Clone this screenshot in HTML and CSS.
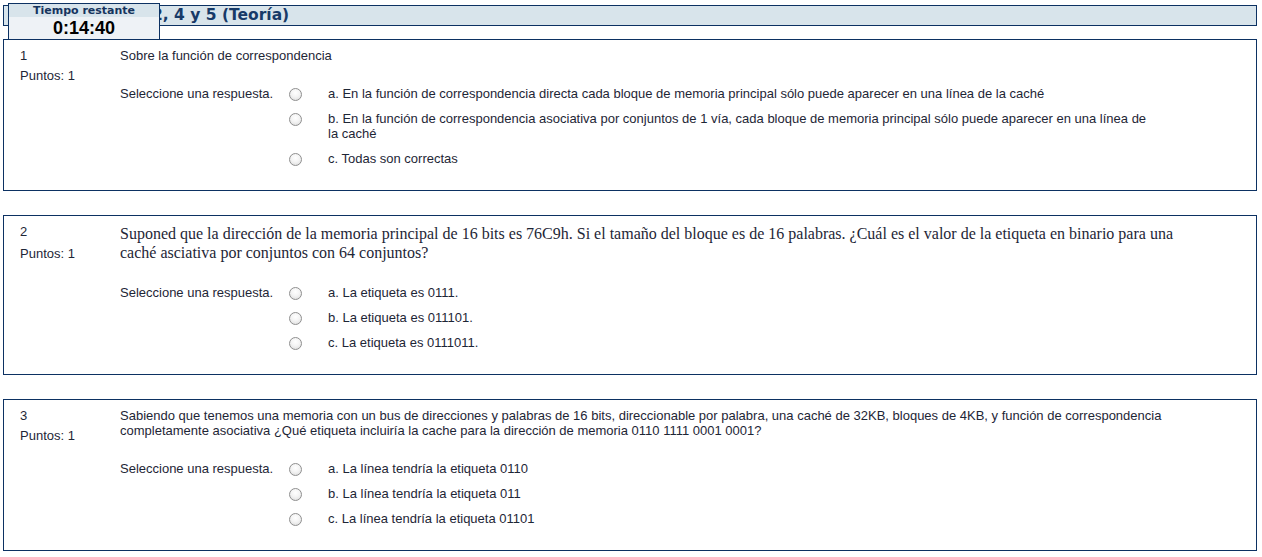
FILE: index.html
```html
<!DOCTYPE html>
<html lang="es">
<head>
<meta charset="utf-8">
<title>Examen</title>
<link rel="stylesheet" href="styles.css">
</head>
<body>
<div class="page">
  <div class="timer">
    <div class="timer-label">Tiempo restante</div>
    <div class="timer-value">0:14:40</div>
  </div>
  <h2 class="quiz-title">2, 4 y 5 (Teoría)</h2>

  <div class="que">
    <div class="info">
      <div class="no">1</div>
      <div class="grade">Puntos: 1</div>
    </div>
    <div class="content">
      <div class="qtext">Sobre la función de correspondencia</div>
      <div class="ablock">
        <div class="prompt">Seleccione una respuesta.</div>
        <div class="answer">
          <div class="r"><input type="radio" name="q1"><label class="opt">a. En la función de correspondencia directa cada bloque de memoria principal sólo puede aparecer en una línea de la caché</label></div>
          <div class="r"><input type="radio" name="q1"><label class="opt">b. En la función de correspondencia asociativa por conjuntos de 1 vía, cada bloque de memoria principal sólo puede aparecer en una línea de la caché</label></div>
          <div class="r"><input type="radio" name="q1"><label class="opt">c. Todas son correctas</label></div>
        </div>
      </div>
    </div>
  </div>

  <div class="que">
    <div class="info">
      <div class="no">2</div>
      <div class="grade grade-serif">Puntos: 1</div>
    </div>
    <div class="content">
      <div class="qtext qtext-serif">Suponed que la dirección de la memoria principal de 16 bits es 76C9h. Si el tamaño del bloque es de 16 palabras. ¿Cuál es el valor de la etiqueta en binario para una caché asciativa por conjuntos con 64 conjuntos?</div>
      <div class="ablock">
        <div class="prompt">Seleccione una respuesta.</div>
        <div class="answer">
          <div class="r"><input type="radio" name="q2"><label class="opt">a. La etiqueta es 0111.</label></div>
          <div class="r"><input type="radio" name="q2"><label class="opt">b. La etiqueta es 011101.</label></div>
          <div class="r"><input type="radio" name="q2"><label class="opt">c. La etiqueta es 0111011.</label></div>
        </div>
      </div>
    </div>
  </div>

  <div class="que">
    <div class="info">
      <div class="no">3</div>
      <div class="grade">Puntos: 1</div>
    </div>
    <div class="content">
      <div class="qtext">Sabiendo que tenemos una memoria con un bus de direcciones y palabras de 16 bits, direccionable por palabra, una caché de 32KB, bloques de 4KB, y función de correspondencia completamente asociativa ¿Qué etiqueta incluiría la cache para la dirección de memoria 0110 1111 0001 0001?</div>
      <div class="ablock">
        <div class="prompt">Seleccione una respuesta.</div>
        <div class="answer">
          <div class="r"><input type="radio" name="q3"><label class="opt">a. La línea tendría la etiqueta 0110</label></div>
          <div class="r"><input type="radio" name="q3"><label class="opt">b. La línea tendría la etiqueta 011</label></div>
          <div class="r"><input type="radio" name="q3"><label class="opt">c. La línea tendría la etiqueta 01101</label></div>
        </div>
      </div>
    </div>
  </div>
</div>
</body>
</html>
```
FILE: styles.css
```css
html, body {
  margin: 0;
  padding: 0;
  background: #ffffff;
}

body {
  font-family: "Liberation Sans", Arial, sans-serif;
  font-size: 13px;
  color: #1e2636;
}

.page {
  position: relative;
  padding: 5px 5px 0 3px;
}

.timer {
  position: absolute;
  top: 3px;
  left: 8px;
  width: 152px;
  height: 37px;
  box-sizing: border-box;
  border: 1px solid #0c3162;
  background: #eef2f6;
  text-align: center;
  z-index: 2;
}

.timer-label {
  background: #d8e4eb;
  height: 13px;
  font-family: "DejaVu Sans", Verdana, sans-serif;
  font-weight: bold;
  font-size: 11px;
  line-height: 13px;
  color: #16345e;
}

.timer-value {
  font-family: "Liberation Sans", Arial, sans-serif;
  font-weight: bold;
  font-size: 18px;
  line-height: 22px;
  color: #000000;
}

.quiz-title {
  margin: 0;
  height: 21px;
  box-sizing: border-box;
  border: 1px solid #0c3162;
  background: #d8e4eb;
  font-family: "DejaVu Sans", Verdana, sans-serif;
  font-weight: bold;
  font-size: 15.5px;
  line-height: 19px;
  color: #173a68;
  padding-left: 148px;
  white-space: nowrap;
  overflow: hidden;
}

.que {
  display: flex;
  border: 1px solid #0c3162;
  padding: 8px 0 24px 0;
  margin-top: 24px;
}

.quiz-title + .que {
  margin-top: 13px;
}

.info {
  width: 100px;
  padding-left: 16px;
  flex: none;
  line-height: 15px;
}

.grade {
  margin-top: 5px;
}

.grade-serif {
  margin-top: 7px;
}

.content {
  flex: 1;
  padding-right: 76px;
  min-width: 0;
}

.qtext {
  line-height: 15px;
}

.qtext-serif {
  font-family: "Liberation Serif", "Times New Roman", serif;
  font-size: 16px;
  line-height: 19px;
}

.ablock {
  display: flex;
  margin-top: 23px;
  line-height: 15px;
}

.prompt {
  width: 168px;
  flex: none;
}

.answer {
  display: flex;
  flex-direction: column;
  gap: 10px;
}

.r {
  display: flex;
  align-items: flex-start;
}

.r input[type="radio"] {
  -webkit-appearance: none;
  appearance: none;
  flex: none;
  width: 13px;
  height: 13px;
  margin: 2px 0 0 1px;
  border: 1px solid #8f8f8f;
  border-radius: 50%;
  background: radial-gradient(circle at 50% 35%, #ffffff 0%, #f4f4f4 45%, #d9d9d9 100%);
  box-sizing: border-box;
}

.opt {
  margin-left: 26px;
  max-width: 822px;
}
```
